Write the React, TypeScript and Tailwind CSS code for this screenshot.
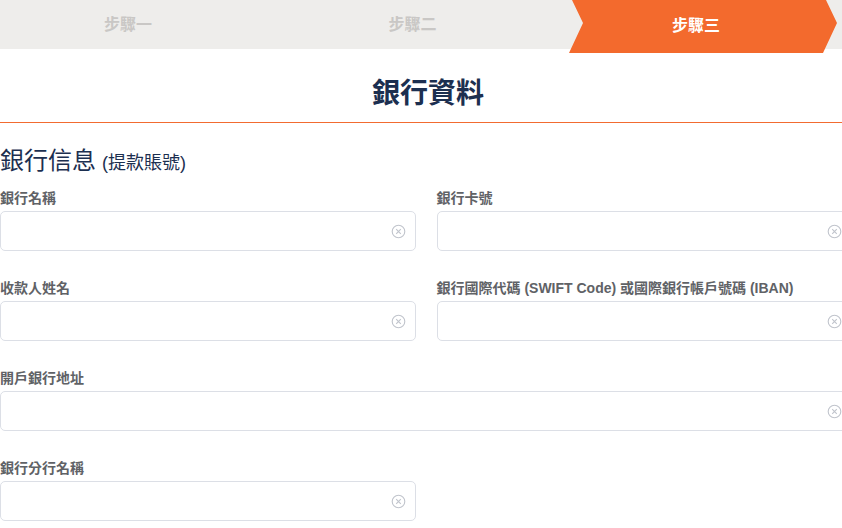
import React from 'react';

const FONT = { fontFamily: '"Liberation Sans", "Noto Sans CJK TC", sans-serif' };

const ClearIcon: React.FC = () => (
  <svg width="15" height="15" viewBox="0 0 15 15" fill="none" stroke="#c0c4cc" strokeWidth="1.1">
    <circle cx="7.5" cy="7.5" r="6.3" />
    <path d="M5.2 5.2 L9.8 9.8 M9.8 5.2 L5.2 9.8" />
  </svg>
);

interface FieldProps {
  label: string;
  className?: string;
}

const Field: React.FC<FieldProps> = ({ label, className }) => (
  <div className={`mb-[30px] ${className ?? ''}`}>
    <div className="text-[14px] leading-[14px] font-bold text-[#606266] mb-[6px] whitespace-nowrap">{label}</div>
    <div className="h-[40px] border border-[#dcdfe6] rounded-[5px] bg-white flex items-center justify-end pr-[9px]">
      <ClearIcon />
    </div>
  </div>
);

export default function App() {
  return (
    <div className="w-[842px] h-[528px] overflow-hidden bg-white" style={FONT}>
      {/* 步驟 */}
      <div className="h-[49px] bg-[#eeedeb] flex items-start text-[16px] font-bold">
        <div className="w-[256px] h-[49px] flex items-center justify-center text-[#c9c7c5]">步驟一</div>
        <div className="w-[313px] h-[49px] flex items-center justify-center text-[#c9c7c5]">步驟二</div>
        <div className="relative w-[268px] h-[53px] shrink-0 bg-[#f36a2d] text-white flex items-start justify-center pr-[14px] pt-[14px] [clip-path:polygon(3px_0,257px_0,268px_23px,254px_53px,0_53px,14px_23px)]">
          步驟三
        </div>
      </div>

      {/* 標題 */}
      <div className="mt-[31px] text-center text-[28px] leading-[28px] font-bold text-[#1c2f50] pl-[14px]">
        銀行資料
      </div>
      <div className="mt-[14px] h-[1px] bg-[#f26b30]" />

      <div className="w-[852px]">
        <div className="mt-[26px] text-[#1c2f50] leading-[24px] whitespace-nowrap">
          <span className="text-[24px]">銀行信息</span>
          <span className="text-[18px] ml-[6px]">(提款賬號)</span>
        </div>

        <div className="mt-[15px] grid grid-cols-2 gap-x-[21px]">
          <Field label="銀行名稱" />
          <Field label="銀行卡號" />
          <Field label="收款人姓名" />
          <Field label="銀行國際代碼 (SWIFT Code) 或國際銀行帳戶號碼 (IBAN)" />
          <Field label="開戶銀行地址" className="col-span-2" />
          <Field label="銀行分行名稱" />
        </div>
      </div>
    </div>
  );
}
